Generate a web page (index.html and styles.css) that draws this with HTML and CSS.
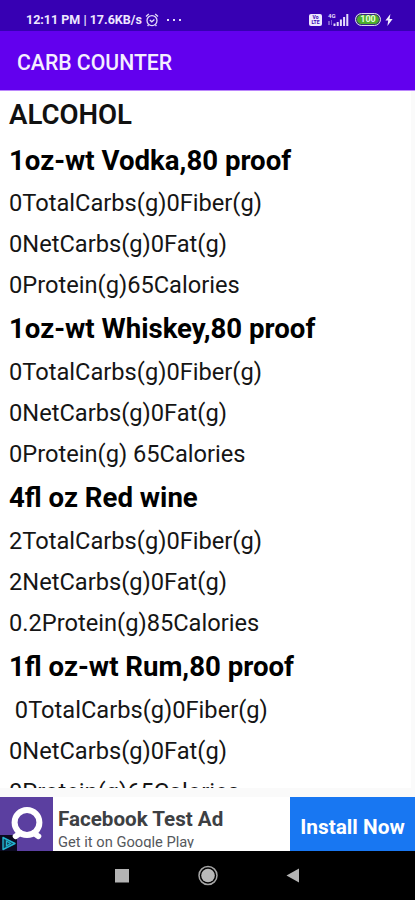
FILE: index.html
```
<!DOCTYPE html>
<html lang="en">
<head>
<meta charset="utf-8">
<meta name="viewport" content="width=device-width, initial-scale=1">
<title>Carb Counter</title>
<link rel="stylesheet" href="styles.css">
</head>
<body>
<div class="phone">

  <div class="status">
    <span class="clock">12:11 PM | 17.6KB/s</span>
    <svg class="alarm" width="14" height="14" viewBox="0 0 14 14" fill="none" stroke="#e4dcfa" stroke-width="1.3">
      <circle cx="7" cy="7.6" r="5"/>
      <path d="M1 3.4L3.8 1M13 3.4L10.2 1M4.8 7l2 1.8 2.6-2.4M3.6 11.6l-1 1.4M10.4 11.6l1 1.4"/>
    </svg>
    <span class="dots"><i></i><i></i><i></i></span>
    <span class="volte"><b>Vo</b><b>LTE</b></span>
    <svg class="signal" width="23" height="14" viewBox="0 0 23 14" fill="#e4dcfa">
      <text x="1" y="5.4" class="net">4G</text>
      <path opacity=".4" d="M1 8h2v4H1zM4 7h1v5H4z"/>
      <path d="M6.5 10.5h2V13h-2zM9.7 9h2v4h-2zM12.9 6.5h2V13h-2zM16.1 4h2v9h-2zM19.3 1h2v12h-2z"/>
    </svg>
    <span class="battery">100</span>
    <svg class="bolt" width="8" height="12" viewBox="0 0 8 12" fill="#f1ecff">
      <path d="M5.4 0L.4 6.6h2.8L2.4 12l5.2-7H4.6z"/>
    </svg>
  </div>

  <div class="toolbar">CARB COUNTER</div>

  <div class="list">
    <h2 class="category">ALCOHOL</h2>
    <h2>1oz-wt Vodka,80 proof</h2>
    <p>0TotalCarbs(g)0Fiber(g)</p>
    <p>0NetCarbs(g)0Fat(g)</p>
    <p>0Protein(g)65Calories</p>
    <h2>1oz-wt Whiskey,80 proof</h2>
    <p>0TotalCarbs(g)0Fiber(g)</p>
    <p>0NetCarbs(g)0Fat(g)</p>
    <p>0Protein(g) 65Calories</p>
    <h2>4fl oz Red wine</h2>
    <p>2TotalCarbs(g)0Fiber(g)</p>
    <p>2NetCarbs(g)0Fat(g)</p>
    <p>0.2Protein(g)85Calories</p>
    <h2>1fl oz-wt Rum,80 proof</h2>
    <p> 0TotalCarbs(g)0Fiber(g)</p>
    <p>0NetCarbs(g)0Fat(g)</p>
    <p>0Protein(g)65Calories</p>
  </div>

  <div class="ad">
    <svg class="ad-logo" width="53" height="54" viewBox="0 0 53 54">
      <path fill="#5b3fa0" d="M0 0h53v54H0z"/>
      <path fill="#0c0a20" d="M0 38h12q5 0 5 5v11H0z"/>
      <circle cx="27" cy="25.5" r="12.4" fill="none" stroke="#fff" stroke-width="6"/>
      <path d="M15.5 39.3l5-3.3M38.500 39.3l-5-3.3" stroke="#fff" stroke-width="5.6" stroke-linecap="round"/>
      <path fill="#123c50" stroke="#21b3cf" stroke-width="1.4" stroke-linejoin="round" d="M3 40.5L15 46.5L3 52.5z"/>
      <path fill="none" stroke="#21b3cf" stroke-width="1.2" d="M6.5 44v5l4-2.5z"/>
    </svg>
    <div class="ad-text">
      <div class="ad-title">Facebook Test Ad</div>
      <div class="ad-sub">Get it on Google Play</div>
    </div>
    <div class="install">Install Now</div>
  </div>

  <div class="nav">
    <svg width="415" height="49" viewBox="0 0 415 49">
      <path fill="#b4b4b4" d="M115 18h14v13.5h-14z"/>
      <circle cx="208" cy="24.5" r="9" fill="none" stroke="#a6a6a6" stroke-width="1.5"/>
      <circle cx="208" cy="24.5" r="6.8" fill="#b9b9b9"/>
      <path fill="#b4b4b4" d="M286.5 24.5L299 17.5v14z"/>
    </svg>
  </div>

</div>
</body>
</html>
```

FILE: styles.css
```
* {
  box-sizing: border-box;
}

body {
  margin: 0;
  font-family: Roboto, "Liberation Sans", sans-serif;
  background-color: #fafafa;
}

.phone {
  width: 415px;
  height: 900px;
  display: flex;
  flex-direction: column;
  overflow: hidden;
}

/* status bar */
.status {
  height: 31px;
  padding: 8px 22px 0 26px;
  display: flex;
  align-items: center;
  background-color: #3700b3;
  color: #eee8ff;
}

.clock {
  font-size: 12.5px;
  font-weight: 700;
  width: 117px;
  white-space: nowrap;
}

.alarm {
  margin-left: 2px;
}

.dots {
  display: flex;
  gap: 4px;
  margin-left: 8px;
}

.dots i {
  width: 2px;
  height: 2px;
  background-color: #e4dcfa;
}

.volte {
  width: 13px;
  height: 12px;
  margin-left: auto;
  padding-top: 1px;
  border-radius: 2px;
  background-color: #eee8ff;
  color: #3700b3;
  font-size: 5px;
  line-height: 5px;
  text-align: center;
}

.volte b {
  display: block;
}

.signal {
  margin-left: 5px;
}

.net {
  font-size: 6px;
  font-weight: 700;
}

.battery {
  width: 26px;
  height: 13px;
  margin-left: 5px;
  border: 1px solid #ddd6f2;
  border-radius: 7px;
  background-color: #4cae2c;
  box-shadow: inset 0 0 0 1px #3b2a80;
  color: #e6ffd8;
  font-size: 9px;
  font-weight: 700;
  line-height: 11px;
  text-align: center;
}

.bolt {
  margin-left: 4px;
}

.toolbar {
  height: 60px;
  padding-left: 17px;
  border-bottom: 1px solid #bb86fc;
  background-color: #6200ee;
  color: #f4eeff;
  font-size: 21.2px;
  font-weight: 500;
  line-height: 63px;
}

/* food list */
.list {
  height: 697px;
  padding: 1px 0 0 9px;
  border-right: 4px solid #fafafa;
  background-color: #fff;
  overflow: hidden;
  color: #151515;
}

.list h2 {
  margin: 0;
  color: #000;
  font-size: 27.6px;
  font-weight: 700;
  line-height: 45.7px;
}

.list .category {
  color: #111;
  font-weight: 600;
}

.list p {
  margin: 0;
  font-size: 23.65px;
  line-height: 41px;
  white-space: pre;
}

/* banner ad */
.ad {
  height: 54px;
  margin-top: 9px;
  display: flex;
  background-color: #fff;
}

.ad-text {
  width: 237px;
  height: 51px;
  padding: 9px 0 0 5px;
  overflow: hidden;
  white-space: nowrap;
}

.ad-title {
  color: #3d4043;
  font-size: 20.6px;
  font-weight: 700;
  line-height: 26px;
}

.ad-sub {
  color: #55585c;
  font-size: 14.7px;
  line-height: 21px;
}

.install {
  flex: 1;
  background-color: #1877f2;
  color: #fff;
  font-size: 20.8px;
  font-weight: 700;
  line-height: 60px;
  text-align: center;
}

.nav {
  height: 49px;
  background-color: #000;
}
```
